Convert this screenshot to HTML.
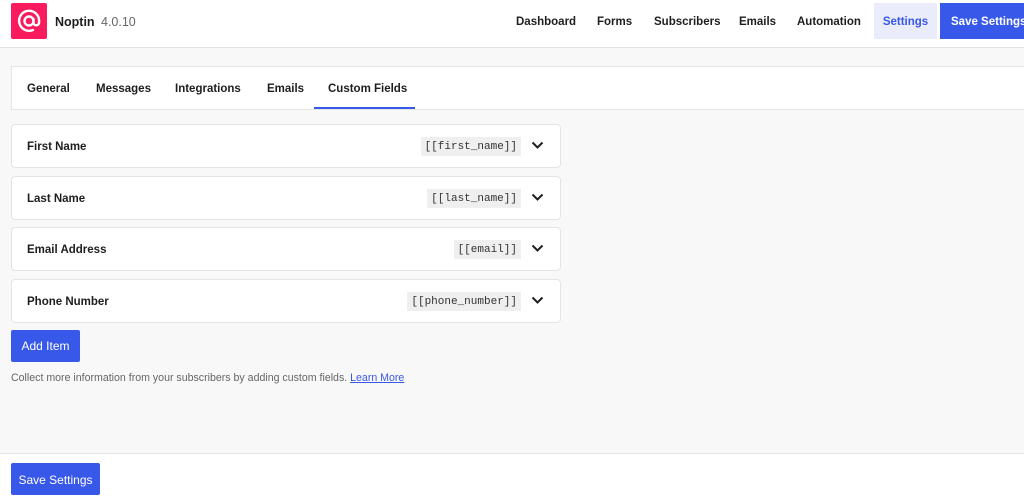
<!DOCTYPE html>
<html><head><meta charset="utf-8"><style>
*{box-sizing:border-box;margin:0;padding:0}
body{width:1024px;height:504px;overflow:hidden;background:#f8f8f8;font-family:"Liberation Sans",sans-serif;font-size:12px;color:#1e1e1e;position:relative}
.hdr{position:absolute;left:0;top:0;width:1024px;height:48px;background:#fff;border-bottom:1px solid #e2e2e2}
.logo{position:absolute;left:11px;top:3px;width:36px;height:36px;background:#fa1a5e;border-radius:2px}
.brand{position:absolute;left:55px;top:15px;font-size:12.5px;font-weight:bold}
.ver{position:absolute;left:101px;top:15px;font-size:12.5px;color:#666}
.nav{position:absolute;top:16px;font-size:11.5px;font-weight:bold;color:#1e1e1e;white-space:nowrap}
.setb{position:absolute;left:874px;top:3px;width:63px;height:36px;background:#eaecfb;color:#3858e9;font-weight:bold;font-size:11.5px;text-align:center;line-height:38px}
.saveb{position:absolute;left:940px;top:3px;width:90px;height:36px;background:#3858e9;color:#fff;font-weight:bold;font-size:11.5px;line-height:38px;padding-left:11px;white-space:nowrap}
.tabs{position:absolute;left:11px;top:66px;width:1020px;height:44px;background:#fff;border:1px solid #e6e6e6}
.tab{position:absolute;top:16px;font-weight:bold;font-size:11.5px;white-space:nowrap}
.tabline{position:absolute;left:302px;top:40px;width:101px;height:2px;background:#3858e9}
.row{position:absolute;left:11px;width:550px;height:44px;background:#fff;border:1px solid #e4e4e4;border-radius:4px}
.row b{position:absolute;left:15px;top:16px;font-size:11.5px}
.code{position:absolute;right:39px;top:12px;height:19px;background:#efefef;font-family:"Liberation Mono",monospace;font-size:11px;line-height:20px;padding:0 4px;color:#333}
.chev{position:absolute;right:16px;top:15px}
.btn{position:absolute;left:11px;background:#3858e9;color:#fff;border-radius:2px;font-size:12px;text-align:center;white-space:nowrap}
.help{position:absolute;left:11px;top:372px;font-size:10.6px;color:#666;white-space:nowrap}
.help a{color:#3858e9;text-decoration:underline}
.foot{position:absolute;left:0;top:453px;width:1024px;height:51px;background:#fff;border-top:1px solid #e4e4e4}
</style></head><body>
<div class="hdr">
<div class="logo"><svg width="36" height="36" viewBox="0 0 36 36"><circle cx="18" cy="18" r="4.5" fill="none" stroke="#fff" stroke-width="2.4"/><path d="M22.5 16v3.5a2.8 2.8 0 0 0 5.6 0V18A10 10 0 1 0 22 27" fill="none" stroke="#fff" stroke-width="2.4" stroke-linecap="round"/></svg></div>
<div class="brand">Noptin</div><div class="ver">4.0.10</div>
<div class="nav" style="left:516px">Dashboard</div>
<div class="nav" style="left:597px">Forms</div>
<div class="nav" style="left:654px">Subscribers</div>
<div class="nav" style="left:739px">Emails</div>
<div class="nav" style="left:797px">Automation</div>
<div class="setb">Settings</div>
<div class="saveb">Save Settings</div>
</div>
<div class="tabs">
<div class="tab" style="left:15px">General</div>
<div class="tab" style="left:84px">Messages</div>
<div class="tab" style="left:163px">Integrations</div>
<div class="tab" style="left:255px">Emails</div>
<div class="tab" style="left:316px">Custom Fields</div>
<div class="tabline"></div>
</div>
<div class="row" style="top:124px"><b>First Name</b><span class="code">[[first_name]]</span><svg class="chev" width="13" height="10" viewBox="0 0 13 10"><path d="M1.5 2.5l5 5 5-5" fill="none" stroke="#1e1e1e" stroke-width="2"/></svg></div>
<div class="row" style="top:176px"><b>Last Name</b><span class="code">[[last_name]]</span><svg class="chev" width="13" height="10" viewBox="0 0 13 10"><path d="M1.5 2.5l5 5 5-5" fill="none" stroke="#1e1e1e" stroke-width="2"/></svg></div>
<div class="row" style="top:227px"><b>Email Address</b><span class="code">[[email]]</span><svg class="chev" width="13" height="10" viewBox="0 0 13 10"><path d="M1.5 2.5l5 5 5-5" fill="none" stroke="#1e1e1e" stroke-width="2"/></svg></div>
<div class="row" style="top:279px"><b>Phone Number</b><span class="code">[[phone_number]]</span><svg class="chev" width="13" height="10" viewBox="0 0 13 10"><path d="M1.5 2.5l5 5 5-5" fill="none" stroke="#1e1e1e" stroke-width="2"/></svg></div>
<div class="btn" style="top:330px;width:69px;height:32px;line-height:33px">Add Item</div>
<div class="help">Collect more information from your subscribers by adding custom fields. <a>Learn More</a></div>
<div class="foot"></div>
<div class="btn" style="top:463px;width:89px;height:32px;line-height:34px">Save Settings</div>
</body></html>
